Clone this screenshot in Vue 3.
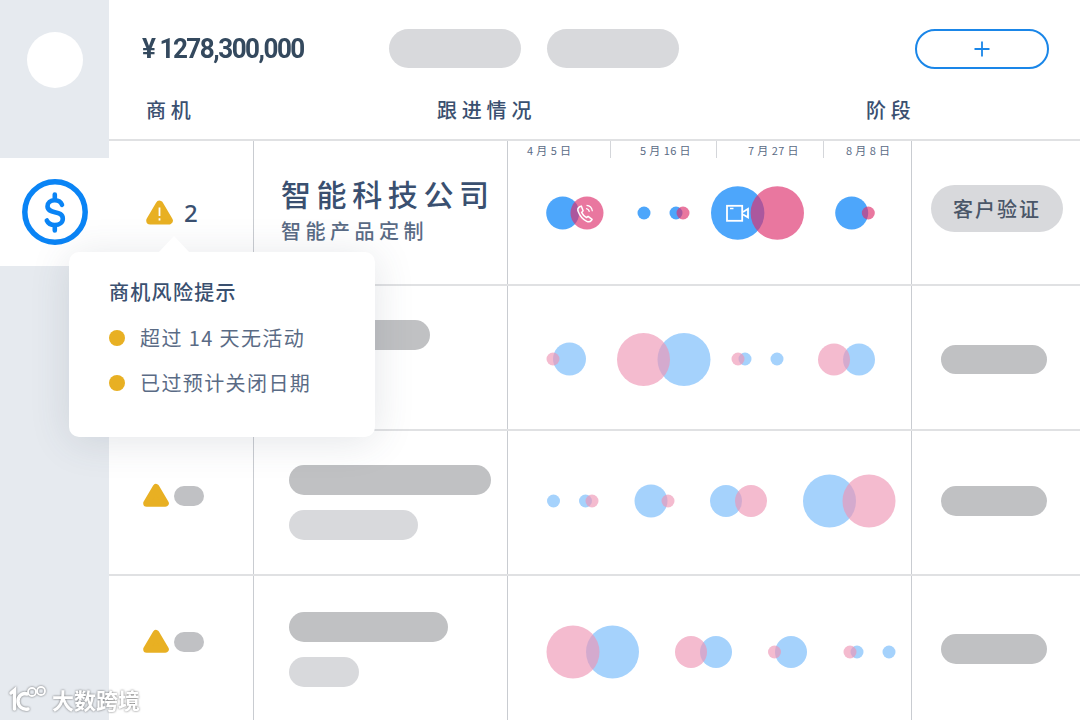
<script setup>
const blue = '#4da6fb'
const pink = '#dd2e6c'
const rows = [
  {
    top: 141, light: false,
    circles: [
      [562.7, 213, 16.5, 'b'], [587, 213, 16.5, 'p'], [644, 213, 6.5, 'b'], [676, 213, 6.5, 'b'], [683, 213, 6.5, 'p'],
      [737.7, 213, 26.7, 'b'], [777.3, 213, 26.7, 'p'], [851.7, 213, 16.5, 'b'], [868.3, 213, 6.5, 'p']
    ]
  },
  {
    top: 286, light: true,
    circles: [
      [553, 359, 6.5, 'p'], [569.5, 359, 16.5, 'b'], [643.5, 359.5, 26.5, 'p'], [684, 359.5, 26.5, 'b'],
      [738, 359, 6.5, 'p'], [745, 359, 6.5, 'b'], [777, 359, 6.5, 'b'], [834, 359.5, 16, 'p'], [859, 359.5, 16, 'b']
    ]
  },
  {
    top: 431, light: true,
    circles: [
      [553.5, 501, 6.5, 'b'], [585.5, 501, 6.5, 'b'], [592, 501, 6.5, 'p'], [651, 501, 16.5, 'b'], [668, 501, 6.5, 'p'],
      [726, 501, 16, 'b'], [751, 501, 16, 'p'], [829.5, 501, 26.5, 'b'], [869, 501, 26.5, 'p']
    ]
  },
  {
    top: 576, light: true,
    circles: [
      [573, 652, 26.5, 'p'], [612.5, 652, 26.5, 'b'], [691, 652, 16, 'p'], [716, 652, 16, 'b'],
      [774.5, 652, 6.5, 'p'], [791, 652, 16, 'b'], [850, 652, 6.5, 'p'], [857, 652, 6.5, 'b'], [889, 652, 6.5, 'b']
    ]
  }
]
const dates = [
  { text: '4 月 5 日', width: 103, pad: 19 },
  { text: '5 月 16 日', width: 106, pad: 29 },
  { text: '7 月 27 日', width: 107, pad: 31 },
  { text: '8 月 8 日', width: 87, pad: 22 }
]
const ordered = (list) => [...list.filter((c) => c[3] === 'b'), ...list.filter((c) => c[3] === 'p')]
const fill = (k) => (k === 'b' ? blue : pink)
const op = (k) => (k === 'b' ? 1 : 0.65)
</script>

<template>
  <div class="page">
    <aside class="side">
      <div class="avatar"></div>
      <div class="side-active">
        <svg width="68" height="68" viewBox="0 0 68 68" fill="none">
          <circle cx="34" cy="34" r="30.2" stroke="#0a84f5" stroke-width="5.500" />
          <path d="M41 26.800C40 24 37.300 22.300 33.800 22.300 29.300 22.300 26.500 24.800 26.500 28.300 26.500 36.800 41.800 31.500 41.800 40.800 41.800 44.500 38.500 47 33.800 47 29.800 47 27 45.200 25.800 42.500" stroke="#0a84f5" stroke-width="4.600" stroke-linecap="round" stroke-linejoin="round" />
          <path d="M33.800 16.500v5M33.800 47.500v5" stroke="#0a84f5" stroke-width="4.600" stroke-linecap="round" />
        </svg>
      </div>
    </aside>

    <main class="main">
      <div class="toolbar">
        <div class="amount-wrap"><div class="amount">¥ 1278,300,000</div></div>
        <div class="pills">
          <span class="pill"></span>
          <span class="pill"></span>
        </div>
        <div class="add-btn">
          <svg width="16" height="16" viewBox="0 0 16 16"><path d="M8 .5v15M.5 8h15" stroke="#1a86e8" stroke-width="1.800" /></svg>
        </div>
      </div>
      <div class="thead">
        <div class="th th-1">商机</div>
        <div class="th th-2">跟进情况</div>
        <div class="th th-3">阶段</div>
      </div>

      <div v-for="(row, i) in rows" :key="i" class="row">
        <div class="cell cell-risk">
          <template v-if="i === 0">
            <svg class="warn" width="27" height="25" viewBox="0 0 27 25">
              <path d="M13.500 4.800 22.800 20.500H4.200z" fill="#e8b023" stroke="#e8b023" stroke-width="8" stroke-linejoin="round" />
              <path d="M13.500 7.500v8.500M13.500 18.200v2.300" stroke="#fff" stroke-width="1.800" fill="none" />
            </svg>
            <span class="count">2</span>
          </template>
          <div v-else class="risk-skel" :class="{ 'risk-3': i === 2, 'risk-4': i === 3 }">
            <svg class="tri" width="26" height="24" viewBox="0 0 26 24">
              <path d="M13 4.500 22.300 20.200H3.700z" fill="#e8b023" stroke="#e8b023" stroke-width="7" stroke-linejoin="round" />
            </svg>
            <span class="mini"></span>
          </div>
        </div>

        <div class="cell cell-info" :class="'info-' + i">
          <template v-if="i === 0">
            <div class="company">智能科技公司</div>
            <div class="product">智能产品定制</div>
          </template>
          <template v-else-if="i === 1">
            <span class="bar bar-dark bar-141"></span>
          </template>
          <template v-else-if="i === 2">
            <span class="bar bar-dark bar-202"></span>
            <span class="bar bar-light bar-129"></span>
          </template>
          <template v-else>
            <span class="bar bar-dark bar-159"></span>
            <span class="bar bar-light bar-70"></span>
          </template>
        </div>

        <div class="cell cell-time">
          <div v-if="i === 0" class="dates">
            <span v-for="d in dates" :key="d.text" class="date" :style="{ width: d.width + 'px', paddingLeft: d.pad + 'px' }">{{ d.text }}</span>
          </div>
          <svg class="bubbles" :class="{ light: row.light }" width="404" height="144" :viewBox="`508 ${row.top} 404 144`">
            <circle v-for="(c, j) in ordered(row.circles)" :key="j" :cx="c[0]" :cy="c[1]" :r="c[2]" :fill="fill(c[3])" :fill-opacity="op(c[3])" />
            <g v-if="i === 0" fill="none" stroke="#fff">
              <path d="M579.500 206.800c-1.600 1-2.100 2.700-1.300 4.700 1.500 4 4.800 8 8.500 9.800 1.900.9 3.700.5 4.800-1l.6-.9-4-3-1.600 1.200c-2.100-1-3.900-3.100-4.900-5.200l1.500-1.600-1.800-4.700z" stroke-width="1.500" stroke-linejoin="round" />
              <path d="M586 208.500c1.900.3 3.100 1.600 3.400 3.400M586.500 205.300c3.200.3 5.500 2.700 5.900 5.900" stroke-width="1.200" />
              <rect x="727" y="205.800" width="15.200" height="15" stroke-width="1.800" />
              <path d="M743 212l5-3.200v8.600l-5-2.900" stroke-width="1.800" />
              <path d="M730 208.500h3.500" stroke-width="1.500" />
            </g>
          </svg>
        </div>

        <div class="cell cell-stage">
          <span v-if="i === 0" class="stage">客户验证</span>
          <span v-else class="stage-skel" :class="'stage-' + i"></span>
        </div>
      </div>
    </main>

    <div class="tip">
      <span class="tip-arrow"></span>
      <div class="tip-title">商机风险提示</div>
      <div class="tip-item"><i></i>超过 14 天无活动</div>
      <div class="tip-item"><i></i>已过预计关闭日期</div>
    </div>

    <div class="mark">
      <svg width="42" height="34" viewBox="0 0 42 34" fill="none" stroke="#fff" stroke-linecap="round">
        <path d="M3 11 6.500 8v19" stroke-width="3.500" />
        <path d="M19 12c-5-1.500-9 2-9 7s4 9 10 8" stroke-width="3.500" />
        <circle cx="24" cy="10" r="4" stroke-width="1.800" />
        <circle cx="33" cy="9" r="4" stroke-width="1.800" />
      </svg>
      <span>大数跨境</span>
    </div>
  </div>
</template>

<style>
html, body { margin: 0; background: #fff; }
</style>

<style scoped>
.page {
  position: relative;
  display: flex;
  width: 1080px;
  height: 720px;
  overflow: hidden;
  background: #fff;
  font-family: "Noto Sans CJK SC", "Noto Sans", sans-serif;
  color: #3a5070;
}
.side {
  width: 109px;
  flex: none;
  background: #e6eaef;
  padding-top: 32px;
  box-sizing: border-box;
}
.avatar {
  width: 56px;
  height: 56px;
  border-radius: 50%;
  background: #fff;
  margin: 0 0 70px 27px;
}
.side-active {
  height: 108px;
  background: #fff;
  display: flex;
  align-items: center;
  justify-content: center;
}
.main { flex: 1; min-width: 0; }
.toolbar {
  height: 96px;
  box-sizing: border-box;
  padding: 29px 31px 0 33px;
  display: flex;
  align-items: flex-start;
}
.amount-wrap { width: 247px; flex: none; }
.amount {
  font-family: Roboto, "Liberation Sans", sans-serif;
  font-weight: 700;
  font-size: 28px;
  line-height: 39px;
  letter-spacing: -1.6px;
  color: #34495e;
  white-space: nowrap;
  transform: scaleX(0.93);
  transform-origin: left center;
}
.pills { display: flex; gap: 26px; }
.pill {
  width: 132px;
  height: 39px;
  border-radius: 20px;
  background: #d8d9dc;
}
.add-btn {
  margin-left: auto;
  width: 134px;
  height: 40px;
  box-sizing: border-box;
  border: 2px solid #1a86e8;
  border-radius: 20px;
  display: flex;
  align-items: center;
  justify-content: center;
}
.thead {
  height: 45px;
  box-sizing: border-box;
  border-bottom: 2px solid #e0e1e3;
  display: flex;
  font-size: 20px;
  font-weight: 500;
  letter-spacing: 4.800px;
  line-height: 28px;
  color: #3a5070;
}
.th-1 { margin-left: 37px; width: 291px; }
.th-2 { width: 429px; }
.row {
  height: 145px;
  box-sizing: border-box;
  border-bottom: 2px solid #e0e1e3;
  display: grid;
  grid-template-columns: 145px 254px 404px 1fr;
}
.row:last-child { border-bottom: 0; }
.cell { position: relative; box-sizing: border-box; border-right: 1px solid #c9ccd1; }
.cell-risk { display: flex; align-items: flex-start; padding-left: 37px; }
.warn { margin-top: 59px; }
.count {
  margin: 56px 0 0 11px;
  font-family: "Noto Sans", sans-serif;
  font-size: 24px;
  font-weight: 500;
  line-height: 32px;
  color: #3a5070;
}
.risk-skel { display: flex; align-items: center; gap: 5px; margin-left: -3px; }
.risk-3 { margin-top: 54px; }
.risk-4 { margin-top: 55px; }
.tri { margin-top: -2px; }
.mini {
  width: 30px;
  height: 20px;
  border-radius: 10px;
  background: #c0c1c4;
}
.cell-info {
  display: flex;
  flex-direction: column;
  align-items: flex-start;
  padding-left: 35px;
}
.info-0 { padding-left: 27px; }
.info-1 { padding-top: 34px; }
.info-2 { padding-top: 34px; gap: 15px; }
.info-3 { padding-top: 36px; gap: 15px; }
.company {
  margin-top: 31px;
  font-size: 30px;
  font-weight: 500;
  line-height: 42px;
  letter-spacing: 5.600px;
  color: #3a5070;
  white-space: nowrap;
}
.product {
  font-size: 20px;
  font-weight: 500;
  line-height: 28px;
  letter-spacing: 4.500px;
  color: #5a6b85;
  margin-top: 3px;
  white-space: nowrap;
}
.bar { display: block; height: 30px; border-radius: 15px; }
.bar-dark { background: #c0c1c3; }
.bar-light { background: #d8d9dc; }
.bar-141 { width: 141px; }
.bar-202 { width: 202px; }
.bar-129 { width: 129px; }
.bar-159 { width: 159px; }
.bar-70 { width: 70px; }
.dates {
  position: absolute;
  top: 0;
  left: 0;
  display: flex;
  height: 17px;
}
.date {
  box-sizing: border-box;
  font-size: 11px;
  line-height: 18px;
  letter-spacing: 0.4px;
  color: #5a6b85;
  border-right: 1px solid #d4d6da;
  white-space: nowrap;
}
.date:last-child { border-right: 0; }
.bubbles { display: block; position: absolute; top: 0; left: 0; }
.bubbles.light { opacity: 0.5; }
.cell-stage { border-right: 0; padding-left: 29px; display: flex; align-items: center; }
.stage {
  margin-left: -10px;
  margin-top: -9px;
  width: 132px;
  height: 47px;
  border-radius: 24px;
  background: #d8d9dc;
  font-size: 20px;
  font-weight: 500;
  line-height: 47px;
  letter-spacing: 2px;
  text-align: center;
  color: #4a5668;
}
.stage-skel {
  width: 106px;
  height: 30px;
  border-radius: 15px;
  background: #c0c1c3;
}
.stage-1 { margin-top: 3px; height: 29px; }
.stage-2 { margin-top: -3px; }
.stage-3 { margin-top: 1px; }
.tip {
  position: absolute;
  left: 69px;
  top: 252px;
  width: 306px;
  height: 185px;
  box-sizing: border-box;
  padding: 26px 0 0 40px;
  background: #fff;
  border-radius: 10px;
  box-shadow: 0 4px 40px rgba(60, 70, 90, 0.14);
}
.tip-arrow {
  position: absolute;
  left: 89px;
  top: -16px;
  width: 0;
  height: 0;
  border-left: 16px solid transparent;
  border-right: 16px solid transparent;
  border-bottom: 17px solid #fff;
}
.tip-title {
  font-size: 20px;
  font-weight: 500;
  line-height: 28px;
  letter-spacing: 1.300px;
  color: #3a5070;
  margin-bottom: 18px;
}
.tip-item {
  display: flex;
  align-items: center;
  font-size: 20px;
  line-height: 28px;
  letter-spacing: 1.400px;
  color: #5a6b85;
  margin-bottom: 17px;
  white-space: pre;
}
.tip-item i {
  width: 16px;
  height: 16px;
  border-radius: 50%;
  background: #e8b023;
  margin-right: 15px;
}
.mark {
  position: absolute;
  left: 8px;
  top: 682px;
  display: flex;
  align-items: center;
  gap: 2px;
  color: #fff;
  font-size: 22px;
  font-weight: 700;
  line-height: 34px;
  filter: drop-shadow(0 0 1px rgba(0, 0, 0, 0.55));
}
</style>
